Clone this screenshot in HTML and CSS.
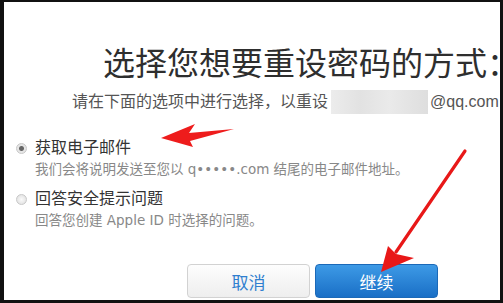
FILE: index.html
```html
<!DOCTYPE html>
<html lang="zh-CN">
<head>
  <meta charset="UTF-8" />
  <title>选择您想要重设密码的方式</title>
  <link rel="stylesheet" href="styles.css">
</head>
<body>
  <div class="frame">
    <h1 class="titulo">选择您想要重设密码的方式：</h1>
    <p class="sub">请在下面的选项中进行选择，以重设<span class="blur"></span>@qq.com</p>

    <div class="opcoes">
      <div class="opcao">
        <span class="radio on"></span>
        <div>
          <div class="rotulo">获取电子邮件</div>
          <div class="desc">我们会将说明发送至您以 q•••••.com 结尾的电子邮件地址。</div>
        </div>
      </div>
      <div class="opcao">
        <span class="radio"></span>
        <div>
          <div class="rotulo">回答安全提示问题</div>
          <div class="desc">回答您创建 Apple ID 时选择的问题。</div>
        </div>
      </div>
    </div>

    <div class="botoes">
      <button class="btn cancelar">取消</button>
      <button class="btn continuar">继续</button>
    </div>

    <!-- setas vermelhas de anotação -->
    <svg class="setas" width="503" height="303" viewBox="0 0 503 303">
      <path d="M161 138 L195 124 L189 133 L234 129 L190 141 L193 147 Z" fill="#ee1c1c"/>
      <line x1="465" y1="151" x2="396" y2="252" stroke="#e81818" stroke-width="3.2" stroke-linecap="round"/>
      <path d="M381 272 L388 246 L396 254 L414 258 Z" fill="#e81818"/>
    </svg>
  </div>
</body>
</html>
```

FILE: styles.css
```css
body {
  margin: 0;
  font-family: "Liberation Sans", "Noto Sans CJK SC", sans-serif;
  background: #fff;
}
.frame {
  position: relative;
  box-sizing: border-box;
  width: 503px;
  height: 303px;
  border-style: solid;
  border-color: #111;
  border-width: 2px 3px 3px 4px;
  overflow: hidden;
  background: #fff;
}
.titulo {
  margin: 0;
  padding: 40px 0 0 99px;
  font-size: 32px;
  font-weight: normal;
  line-height: 44px;
  color: #2e2e2e;
  white-space: nowrap;
}
.sub {
  margin: 4px 0 0 68px;
  font-size: 16px;
  line-height: 24px;
  color: #555;
  white-space: nowrap;
  display: flex;
  align-items: center;
}
.blur {
  display: inline-block;
  width: 97px;
  height: 24px;
  margin: 0 2px 0 3px;
  background: linear-gradient(90deg, #ececec, #e2e2e2 30%, #eaeaea 60%, #dedede);
}
.opcoes { margin-top: 23px; }
.opcao {
  display: flex;
  align-items: flex-start;
  margin-left: 12px;
  margin-bottom: 8px;
}
.radio {
  width: 9px;
  height: 9px;
  margin: 6px 8px 0 0;
  border-radius: 50%;
  border: 1px solid #c8c8c8;
  background: radial-gradient(circle, #fafafa, #dcdcdc);
  flex: none;
}
.radio.on {
  background: radial-gradient(circle, #666 0 2px, #e6e6e6 3px);
}
.rotulo {
  font-size: 16px;
  line-height: 21px;
  color: #333;
}
.desc {
  font-family: "DejaVu Sans", "Noto Sans CJK SC", sans-serif;
  font-size: 13.5px;
  line-height: 22px;
  color: #888;
}
.botoes {
  display: flex;
  gap: 5px;
  margin: 33px 0 0 183px;
}
.btn {
  width: 123px;
  height: 34px;
  border-radius: 4px;
  font-family: inherit;
  font-size: 17px;
}
.cancelar {
  border: 1px solid #d2d2d2;
  background: linear-gradient(#fdfdfd, #eeeeee);
  color: #2f7fcf;
}
.continuar {
  border: 1px solid #1b69b8;
  background: linear-gradient(#3d9ae6, #1a6fc6);
  color: #fff;
}
.setas {
  position: absolute;
  left: -4px;
  top: -2px;
  pointer-events: none;
}
```
